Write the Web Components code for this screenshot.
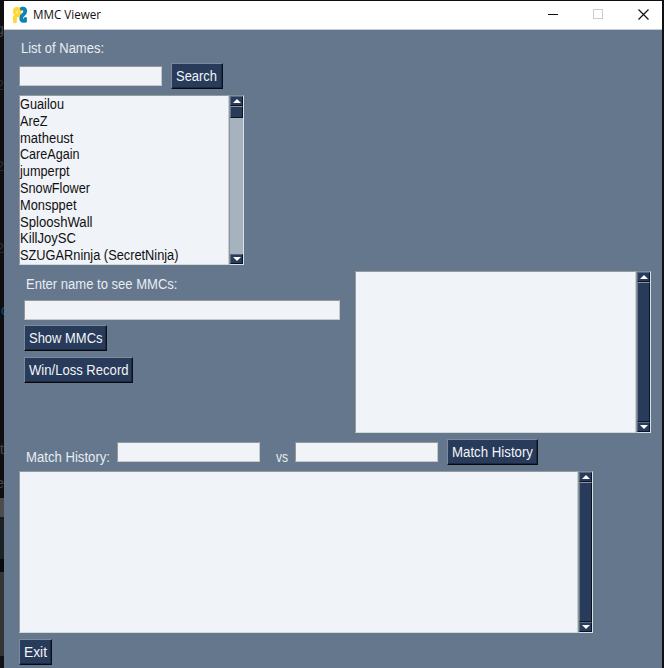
<!DOCTYPE html>
<html lang="en">
<head>
<meta charset="utf-8">
<title>MMC Viewer</title>
<style>
html,body{margin:0;height:100%;overflow:hidden;background:#0f0f11}
body{font-family:"Liberation Sans",Arial,sans-serif;font-size:13.8px}
</style>
</head>
<body>
<mmc-app></mmc-app>
<script>
function define(name, html, setup) {
  const tpl = document.createElement('template');
  tpl.innerHTML = html;
  customElements.define(name, class extends HTMLElement {
    connectedCallback() {
      if (this.shadowRoot) return;
      this.attachShadow({ mode: 'open' }).append(tpl.content.cloneNode(true));
      if (setup) setup(this, this.shadowRoot);
    }
  });
}

// Single line of text; the w attribute is the line's width in pixels.
define('tk-text', `<style>
:host{display:block;white-space:nowrap;line-height:17px;width:max-content}
span{display:inline-block;transform-origin:0 50%}
</style><span><slot></slot></span>`, (el, root) => {
  const span = root.querySelector('span'), w = +el.getAttribute('w');
  if (w) {
    span.style.transform = 'scaleX(' + w / span.getBoundingClientRect().width + ')';
    el.style.width = w + 'px';
  }
});

define('tk-entry', `<style>
:host{display:block;box-sizing:border-box;height:20px;background:#f0f3f7;border:1px solid;border-color:#969696 #c6c8c9 #c6c8c9 #969696}
</style>`);

define('tk-button', `<style>
:host{display:block;box-sizing:border-box;height:26px;width:max-content;background:#283b5b;color:#f2f4f7;border:1px solid;border-color:#7d899c #0b111c #05080d #7d899c;box-shadow:inset -1px -1px #1b2940;padding:4px 0 0 4px}
</style><slot></slot>`);

define('tk-scrollbar', `<style>
:host{display:flex;flex-direction:column;box-sizing:border-box;width:15px;background:#a6b2be;border:1px solid;border-color:#838d97 #d4e2e4 #d4e2e4 #8a949d;flex:none}
.b{box-sizing:border-box;height:10px;background:#283b5b;border:1px solid;border-color:#596a82 #0c1422 #0c1422 #596a82;display:flex;justify-content:center;align-items:center;flex:none}
.thumb{box-sizing:border-box;background:#283b5b;border:1px solid;border-color:#909498 #0c1422 #0c1422 #66788a;flex:1}
:host([short]) .thumb{flex:none;height:12px}
.gap{flex:0}
:host([short]) .gap{flex:1}
svg{display:block}
</style>
<div class="b"><svg width="8" height="4"><path d="M0 4L4 0L8 4Z" fill="#fff"/></svg></div>
<div class="thumb"></div><div class="gap"></div>
<div class="b"><svg width="8" height="4"><path d="M0 0L4 4L8 0Z" fill="#fff"/></svg></div>`);

define('tk-pane', `<style>
:host{display:flex;box-sizing:border-box}
.v{flex:1;box-sizing:border-box;background:#f0f3f7;border:1px solid;border-color:#969a9e #c9cdcf #d3d8da #969a9e;color:#111}
::slotted(tk-text){height:16.8px}
</style><div class="v"><slot></slot></div><slot name="bar"></slot>`);

define('win-titlebar', `<style>
:host{display:flex;align-items:center;box-sizing:border-box;height:29px;background:#fff;border-bottom:1px solid #c5ced6;padding-left:8px;font:12px "Open Sans","Noto Sans",sans-serif;color:#111}
.logo{margin-right:4px;flex:none}
tk-text,::slotted(tk-text){position:relative;top:-1px}
.ctl{margin-left:auto;flex:none}
</style>
<svg class="logo" width="17" height="18" viewBox="0 0 17 18">
<path d="M2.9 15.400V11.800Q2.900 10 4.800 9.700Q7.500 9.200 7.500 6.500V5Q7.500 2.900 5.300 2.900H4.800Q2.900 2.900 2.900 5V6.500" fill="none" stroke="#ffd738" stroke-width="3.900" stroke-linecap="round"/>
<path d="M9.800 2.700H11Q13.200 2.700 13.200 5.200Q13.200 7.400 11.400 8.500Q9.300 9.800 9.300 12.300Q9.300 14.800 11.400 14.800H13.200" fill="none" stroke="#0f82b4" stroke-width="3.800" stroke-linecap="round"/>
<circle cx="13.400" cy="12.800" r="1.700" fill="#0f82b4"/>
</svg>
<slot></slot>
<svg class="ctl" width="114" height="28" fill="none">
<path d="M0 13.5H10" stroke="#111"/>
<rect x="45.500" y="8.500" width="9" height="9" stroke="#ccc"/>
<path d="M90.500 8.500L100.500 18.500M100.500 8.500L90.500 18.500" stroke="#111" stroke-width="1.2"/>
</svg>`);

define('desktop-sliver', `<style>
:host{display:block;position:relative;width:4px;overflow:hidden;background:linear-gradient(#0f0f11 0 498px,#4c4c4d 498px 517px,#14182a 517px 519px,#1c2027 519px 559px,#080a0d 559px 572px,#333536 572px 656px,#101216 656px)}
span{position:absolute;right:0;font:15px/18px "Liberation Sans",sans-serif;color:#454545}
</style>
<span style="top:20px">g</span><span style="top:76px;color:#2c2c2e">2</span><span style="top:157px;color:#2c2c2e">2</span><span style="top:239px;color:#2c2c2e">2</span>
<span style="top:301px;left:1px;color:#075064">c</span><span style="top:440px">t</span><span style="top:474px">e</span>`);

define('mmc-app', `<style>
:host{display:grid;grid-template-columns:4px 658px;height:668px}
.win{display:flex;flex-direction:column;padding-top:1px}
.body{flex:1;background:#64778d;color:#e8edf2;padding:10px 0 0 15px;display:flex;flex-direction:column;align-items:flex-start}
.row{display:flex;align-items:flex-start}
.search{margin-top:6px;gap:9px}
.form{padding-left:5px;display:flex;flex-direction:column;width:331px}
</style>
<desktop-sliver></desktop-sliver>
<div class="win">
<win-titlebar><tk-text w="68">MMC Viewer</tk-text></win-titlebar>
<div class="body">
  <tk-text w="83" style="margin-left:2px">List of Names:</tk-text>
  <div class="row search"><tk-entry style="width:143px;margin-top:3px"></tk-entry>
    <tk-button style="width:52px"><tk-text w="41">Search</tk-text></tk-button></div>
  <tk-pane style="width:225px;height:170px;margin-top:6px">
    <tk-text w="44">Guailou</tk-text><tk-text w="27.500">AreZ</tk-text><tk-text w="53.500">matheust</tk-text><tk-text w="59.500">CareAgain</tk-text><tk-text w="49.500">jumperpt</tk-text><tk-text w="70">SnowFlower</tk-text><tk-text w="56.500">Monsppet</tk-text><tk-text w="72.500">SplooshWall</tk-text><tk-text w="56">KillJoySC</tk-text><tk-text w="158.500">SZUGARninja (SecretNinja)</tk-text>
    <tk-scrollbar slot="bar" short></tk-scrollbar>
  </tk-pane>
  <div class="row" style="margin-top:6px">
    <div class="form">
      <tk-text w="151.500" style="margin:5px 0 0 2px">Enter name to see MMCs:</tk-text>
      <tk-entry style="width:316px;margin-top:7px"></tk-entry>
      <tk-button style="width:83px;margin-top:5px"><tk-text w="73.500">Show MMCs</tk-text></tk-button>
      <tk-button style="width:109px;margin-top:6px"><tk-text w="99.500">Win/Loss Record</tk-text></tk-button>
    </div>
    <tk-pane style="width:296px;height:162px"><tk-scrollbar slot="bar"></tk-scrollbar></tk-pane>
  </div>
  <div class="row" style="margin-top:6px">
    <tk-text w="84" style="margin:10px 0 0 7px">Match History:</tk-text>
    <tk-entry style="width:143px;margin:3px 0 0 7px"></tk-entry>
    <tk-text w="12" style="margin:10px 0 0 16px">vs</tk-text>
    <tk-entry style="width:143px;margin:3px 0 0 7px"></tk-entry>
    <tk-button style="width:91px;margin-left:9px"><tk-text w="81">Match History</tk-text></tk-button>
  </div>
  <tk-pane style="width:574px;height:162px;margin-top:5px"><tk-scrollbar slot="bar"></tk-scrollbar></tk-pane>
  <tk-button style="width:33px;margin-top:6px"><tk-text w="23">Exit</tk-text></tk-button>
</div>
</div>`);
</script>
</body>
</html>
